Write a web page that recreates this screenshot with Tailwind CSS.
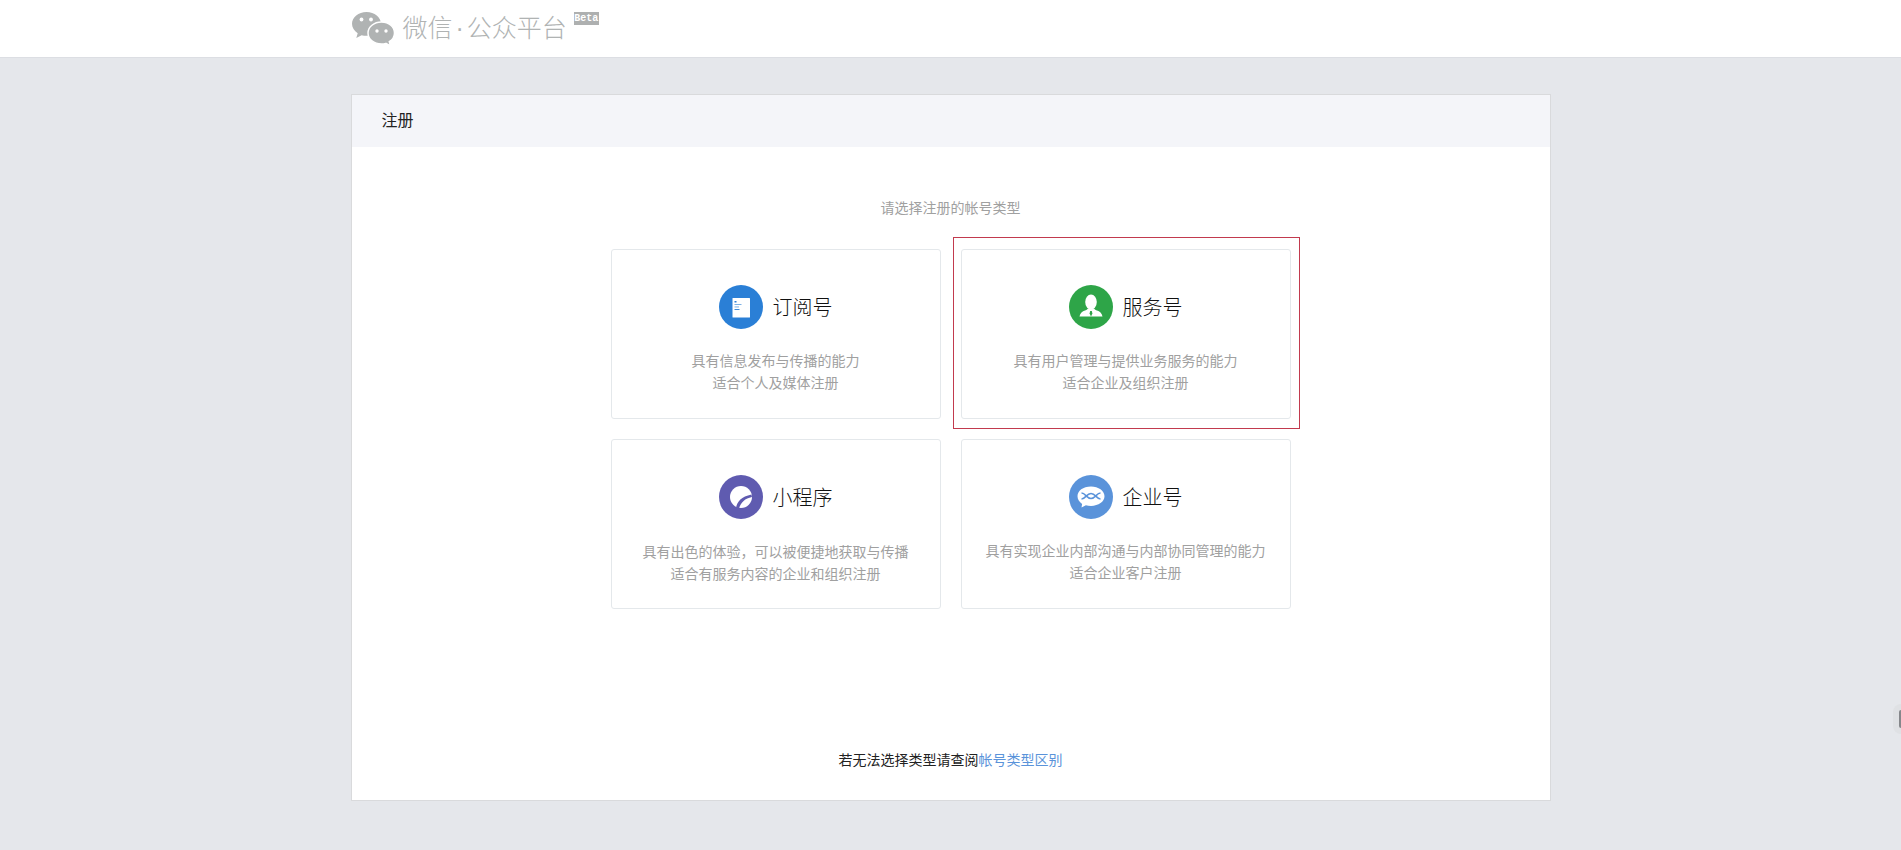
<!DOCTYPE html>
<html lang="zh-CN">
<head>
  <meta charset="UTF-8" />
  <title>微信公众平台</title>
  <script src="https://cdn.jsdelivr.net/npm/@tailwindcss/browser@4"></script>
</head>
<body class="relative h-[850px] overflow-hidden bg-[#e5e7eb] text-[#222] font-['Liberation_Sans','Noto_Sans_CJK_SC',sans-serif] text-sm">

  <!-- Top bar -->
  <header class="h-[58px] bg-white border-b border-[#dcdee3]">
    <div class="w-[1200px] mx-auto flex items-start">
      <svg class="mt-[11px] ml-[1px] w-[43px] h-[35px]" viewBox="0 0 43 35">
        <path fill="#b0b3b3" d="M14.5 1C6.5 1 0 6.2 0 12.8c0 3.9 2.2 7.2 5.7 9.4L4.3 27l5.3-2.8c1.6.4 3.2.6 4.9.6 8 0 14.500-5.400 14.500-12C29 6.200 22.500 1 14.500 1z"/>
        <path fill="#b0b3b3" stroke="#fff" stroke-width="1.500" d="M29.500 11C22 11 16 15.900 16 22s6 11 13.500 11c1.500 0 3-.2 4.400-.6l4.600 2.500-1.200-4.200c3.300-2 5.200-5.100 5.200-8.700C42.500 15.900 37 11 29.500 11z"/>
        <circle cx="9.500" cy="8.500" r="1.900" fill="#fff"/><circle cx="19" cy="8.500" r="1.900" fill="#fff"/>
        <circle cx="25" cy="20" r="1.700" fill="#fff"/><circle cx="34" cy="20" r="1.700" fill="#fff"/>
      </svg>
      <span class="ml-[8px] mt-[10px] text-[25px] leading-[36px] font-light text-[#b0b3b3] whitespace-nowrap">微信<span class="mx-[3px]">·</span>公众平台</span>
      <span class="ml-[7px] mt-[12px] h-[13px] w-[25px] bg-[#aeb0b0] text-white text-[10px] leading-[13px] text-center font-['Liberation_Mono',monospace] font-bold">Beta</span>
    </div>
  </header>

  <!-- Register panel -->
  <main class="mt-[36px] w-[1200px] h-[707px] mx-auto flex flex-col bg-white border border-[#d9dadc]">
    <div class="h-[52px] px-[30px] flex items-center bg-[#f4f5f9] text-base">注册</div>

    <p class="mt-[50px] text-center leading-[22px] text-[#a0a0a0]">请选择注册的帐号类型</p>

    <div class="mt-[30px] mx-auto grid grid-cols-[330px_330px] gap-x-[20px] gap-y-[20px]">

      <div class="h-[170px] rounded-[3px] border border-[#e4e8eb] pt-[35px] text-center">
        <div class="flex items-center justify-center gap-[10px]">
          <svg class="w-[44px] h-[44px]" viewBox="0 0 44 44">
            <circle cx="22" cy="22" r="22" fill="#2a7fd6"/>
            <rect x="13.500" y="13" width="17.500" height="19.500" rx="0.500" fill="#fff"/>
            <rect x="15.500" y="16" width="2" height="1.500" fill="#2a7fd6"/>
            <rect x="15.500" y="19" width="7" height="0.900" fill="#6fa9e3"/>
            <rect x="15.500" y="21.500" width="4.500" height="0.900" fill="#6fa9e3"/>
            <rect x="15.500" y="24" width="5" height="0.900" fill="#2a7fd6"/>
          </svg>
          <span class="h-[44px] text-xl leading-[46px] font-light text-[#111]">订阅号</span>
        </div>
        <p class="mt-[21px] leading-[22px] text-[#a0a0a0]">具有信息发布与传播的能力<br>适合个人及媒体注册</p>
      </div>

      <div class="relative h-[170px] rounded-[3px] border border-[#e4e8eb] pt-[35px] text-center">
        <div class="flex items-center justify-center gap-[10px]">
          <svg class="w-[44px] h-[44px]" viewBox="0 0 44 44">
            <circle cx="22" cy="22" r="22" fill="#2ea548"/>
            <ellipse cx="22" cy="17" rx="5.800" ry="7.500" fill="#fff"/>
            <path fill="#fff" d="M10.500 31.500c.6-3.500 2.800-5.200 5.500-6 1.200-.4 2.300-1 2.800-2h6.400c.5 1 1.600 1.600 2.800 2 2.700.8 4.900 2.500 5.500 6z"/>
            <path fill="#2ea548" d="M21.200 26h1.600l.6 2.500-1.400 3-1.400-3z"/>
          </svg>
          <span class="h-[44px] text-xl leading-[46px] font-light text-[#111]">服务号</span>
        </div>
        <p class="mt-[21px] leading-[22px] text-[#a0a0a0]">具有用户管理与提供业务服务的能力<br>适合企业及组织注册</p>
        <!-- annotation box from the screenshot -->
        <div class="absolute -left-[9px] -top-[13px] w-[347px] h-[192px] border border-[#c23a4e]"></div>
      </div>

      <div class="h-[170px] rounded-[3px] border border-[#e4e8eb] pt-[35px] text-center">
        <div class="flex items-center justify-center gap-[10px]">
          <svg class="w-[44px] h-[44px]" viewBox="0 0 44 44">
            <circle cx="22" cy="22" r="22" fill="#5f5bb0"/>
            <circle cx="22" cy="22" r="11" fill="#fff"/>
            <path fill="#5f5bb0" d="M17 33c1-6.500 5.500-11.500 15.500-13.500l.5 2.500c-7 1.500-11 5-13 11.500z"/>
          </svg>
          <span class="h-[44px] text-xl leading-[46px] font-light text-[#111]">小程序</span>
        </div>
        <p class="mt-[21px] leading-[22px] text-[#a0a0a0]">具有出色的体验<span class="font-['Noto_Sans_CJK_TC',sans-serif]">，</span>可以被便捷地获取与传播<br>适合有服务内容的企业和组织注册</p>
      </div>

      <div class="h-[170px] rounded-[3px] border border-[#e4e8eb] pt-[35px] text-center">
        <div class="flex items-center justify-center gap-[10px]">
          <svg class="w-[44px] h-[44px]" viewBox="0 0 44 44">
            <circle cx="22" cy="22" r="22" fill="#5a93da"/>
            <path fill="#fff" d="M22 11.500c-8 0-13.500 4.400-13.500 9.800 0 3.100 1.800 5.800 4.600 7.600l-.6 3.600 4.400-2.300c1.600.4 3.300.7 5.100.7 7.500 0 13.500-4.200 13.500-9.600S29.500 11.500 22 11.500z"/>
            <path fill="none" stroke="#5a93da" stroke-width="1.500" d="M12.500 18c4 0 5 5.500 9.500 5.500S27.500 18 31.500 18M12.500 24c4 0 5-5.500 9.500-5.500S27.500 24 31.500 24"/>
          </svg>
          <span class="h-[44px] text-xl leading-[46px] font-light text-[#111]">企业号</span>
        </div>
        <p class="mt-[21px] leading-[22px] text-[#a0a0a0]">具有实现企业内部沟通与内部协同管理的能力<br>适合企业客户注册</p>
      </div>
    </div>

    <p class="mt-auto mb-[29px] text-center leading-[22px]">若无法选择类型请查阅<a href="#" class="text-[#5a93da]">帐号类型区别</a></p>
  </main>

  <!-- Floating widget cut off at the window edge -->
  <div class="absolute right-0 top-[704px] w-[8px] h-[30px] flex items-center justify-end rounded-l-full bg-[#dfe1e4]">
    <div class="w-[2px] h-[18px] rounded-l-full bg-[#85878b]"></div>
  </div>
</body>
</html>
